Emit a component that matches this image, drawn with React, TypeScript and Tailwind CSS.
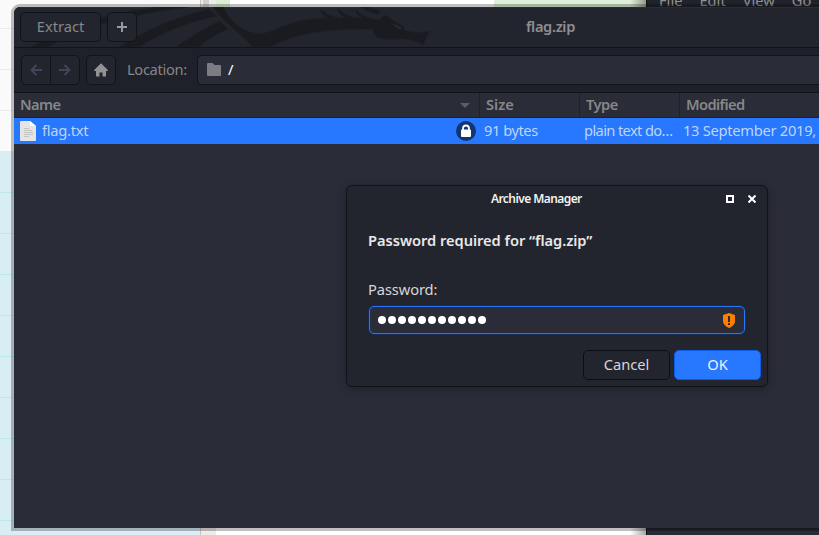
import type { ReactNode } from 'react';

const LINES = [28, 69, 110, 192, 233, 274, 315, 356, 397, 438, 479, 520];

function Backdrop() {
  return (
    <div className="absolute inset-0 flex">
      <div className="relative w-[200px] shrink-0 bg-[#d9edf5]">
        <div className="h-[151px] bg-[#fafafa]" />
        {LINES.map((y) => (
          <div
            key={y}
            className={`absolute left-0 h-px w-full ${y < 151 ? 'bg-[#ebebeb]' : 'bg-[#bce8ef]'}`}
            style={{ top: y }}
          />
        ))}
      </div>
      <div className="w-px bg-[#d0bfb9]" />
      <div className="w-[15px] bg-[#eeebe9]">
        <div className="ml-0.5 h-[7px] w-[6px] bg-[#cfcfcf]" />
      </div>
      <div className="relative w-[430px] bg-white">
        <div className="flex h-[7px] justify-between">
          <div className="w-[14px] bg-[#dcefd5]" />
          <div className="w-[152px] bg-[#dff0d8]" />
        </div>
        <div className="absolute right-0 top-0 h-full w-4 bg-linear-to-r from-transparent to-black/35" />
      </div>
      <div className="flex-1 overflow-hidden border-l border-[#101116] bg-[#20232a]">
        <div className="-mt-[10px] flex h-[540px] gap-[17px] pl-3 text-[14.67px] leading-5 text-[#909294]">
          <span>File</span>
          <span>Edit</span>
          <span>View</span>
          <span>Go</span>
        </div>
        <div className="h-[5px] bg-[#282a35]" />
      </div>
    </div>
  );
}

function Dragon() {
  return (
    <svg className="absolute left-0 top-0" width="440" height="40" viewBox="14 7 440 40" fill="#1a1b20">
      <g stroke="#1e2026" strokeWidth="1">
        <path d="M32 47C65 27 108 13 160 7H188C140 13 85 25 48 47Z" />
        <path d="M119 47C145 30 177 17 209 9L217 16C187 22 159 34 139 47Z" />
        <path d="M177 47C191 36 205 28 220 21L228 29C216 34 207 40 199 47Z" />
        <path d="M213 7H223C231 23 244 33.5 260 33.5C275 33.5 288 18 328 18C323 16 321 13 321 9C327 15 333 18 345 18C340 15 338 12 338 8C344 15 350 18 363 18C358 16 356 13 356 10C363 17 369 19 379 20L385 15C390 18 395 22 404 27V30C413 33 421 33 430 31C427 36 425 40 423 45C411 37 398 39 385 39C377 39 374 35 373 29C326 28 291 34 271 47H252C250 40 222 22 213 7Z" />
        <path d="M361 7C369 7 376 9 381 12L377 14C371 12 366 11 361 7Z" />
      </g>
      <path d="M391 24L399 29H403L397 25Z" fill="#282a31" />
    </svg>
  );
}

function HeaderCell({ className, children }: { className: string; children: ReactNode }) {
  return <div className={`flex items-center justify-between border-[#202229] font-semibold ${className}`}>{children}</div>;
}

function FileManager() {
  return (
    <div className="absolute left-[11px] top-1 h-[527px] w-[811px] rounded-tl-[9px] border-[3px] border-black/25 bg-clip-padding">
      <div className="flex h-full flex-col overflow-hidden rounded-tl-[6px] bg-[#2a2c37] text-[#858789]">
        <div className="relative flex h-[41px] shrink-0 items-center border-b border-[#121318] bg-[#23252e] shadow-[inset_0_1px_0_#2b2d35]">
          <Dragon />
          <div className="relative ml-1.5 flex h-[30px] w-[81px] items-center justify-center rounded-[5px] border border-[#121318] bg-[#23252e] pb-0.5">Extract</div>
          <div className="relative ml-1.5 flex h-[30px] w-[30px] items-center justify-center rounded-[5px] border border-[#121318] bg-[#23252e]">
            <svg width="10" height="10" viewBox="0 0 10 10" fill="#999a9c"><path d="M4 0h2v4h4v2H6v4H4V6H0V4h4z" /></svg>
          </div>
          <div className="ml-[389px] pb-0.5 font-semibold tracking-[-0.35px] text-[#8d8e90]">flag.zip</div>
        </div>
        <div className="flex h-[45px] shrink-0 items-center border-b border-[#121318] bg-[#1e2129]">
          <div className="ml-[7px] flex h-[30px] w-[59px] rounded-[5px] border border-[#121318] bg-[#23252e]">
            <div className="flex w-[29px] items-center justify-center border-r border-[#121318]">
              <svg width="12" height="12" viewBox="0 0 12 12" fill="none" stroke="#41445b" strokeWidth="2"><path d="M12 6H1.5M6.5 1 1.5 6l5 5" /></svg>
            </div>
            <div className="flex flex-1 items-center justify-center">
              <svg width="12" height="12" viewBox="0 0 12 12" fill="none" stroke="#41445b" strokeWidth="2"><path d="M0 6h10.5M5.5 1l5 5-5 5" /></svg>
            </div>
          </div>
          <div className="ml-1.5 flex h-[30px] w-[30px] items-center justify-center rounded-[5px] border border-[#121318] bg-[#23252e]">
            <svg width="14" height="14" viewBox="0 0 14 14" fill="#919294"><path d="M7 .3 13.8 7v1H12v5.5H8.5v-4h-3v4H2V8H.2V7z" /></svg>
          </div>
          <div className="ml-[11px] w-[70px] pb-0.5 tracking-[-0.33px]">Location:</div>
          <div className="flex h-[30px] flex-1 items-center rounded-l-[5px] border border-r-0 border-[#121318] bg-[#2a2c37] pl-[9px]">
            <svg width="15" height="14" viewBox="0 0 15 14" fill="#7c7d82"><path d="M1 0h4.5l2 2H13a1 1 0 0 1 1 1v10H1a1 1 0 0 1-1-1V1a1 1 0 0 1 1-1z" /></svg>
            <span className="ml-1.5 pb-0.5 text-white">/</span>
          </div>
        </div>
        <div className="flex h-[25px] shrink-0 border-b border-[#1d2028]">
          <HeaderCell className="w-[466px] border-r pl-1.5 pr-[9px] tracking-[-0.6px]">
            <span className="pb-0.5">Name</span>
            <svg width="10" height="5" viewBox="0 0 10 5" fill="#5c5e65"><path d="M0 0h10L5 5z" /></svg>
          </HeaderCell>
          <HeaderCell className="w-[100px] border-r pb-0.5 pl-1.5">Size</HeaderCell>
          <HeaderCell className="w-[100px] border-r pb-0.5 pl-1.5 tracking-[-0.5px]">Type</HeaderCell>
          <HeaderCell className="flex-1 pb-0.5 pl-1.5 tracking-[-0.6px]">Modified</HeaderCell>
        </div>
        <div className="flex h-[26px] shrink-0 items-center bg-[#2777ff] text-[#bfd4f8]">
          <div className="flex w-[470px] items-center pl-1.5">
            <svg width="16" height="20" viewBox="0 0 16 20">
              <path d="M1 0h9l6 5v14a1 1 0 0 1-1 1H1a1 1 0 0 1-1-1V1a1 1 0 0 1 1-1z" fill="#e5e5e5" />
              <path d="M10 0v4a1 1 0 0 0 1 1h5z" fill="#fff" />
              <path d="M4 7.5h5M4 9.5h8M4 11.5h9M4 13.5h9M4 15.5h5" stroke="#c4c4c4" />
            </svg>
            <span className="ml-1.5 flex-1 pb-0.5 tracking-[-0.25px]">flag.txt</span>
            <svg className="mr-2" width="20" height="20" viewBox="0 0 20 20">
              <circle cx="10" cy="10" r="10" fill="#14356f" />
              <path d="M7 9V7.5a3 3 0 0 1 6 0V9" fill="none" stroke="#fff" strokeWidth="1.8" />
              <rect x="5" y="8.5" width="10" height="7.5" rx="1" fill="#fff" />
            </svg>
          </div>
          <div className="w-[100px] pb-0.5 tracking-[-0.45px]">91 bytes</div>
          <div className="w-[99px] pb-0.5 tracking-[-0.62px]">plain text do…</div>
          <div className="pb-0.5 tracking-[-0.27px]">13 September 2019,</div>
        </div>
      </div>
    </div>
  );
}

function PasswordDialog() {
  return (
    <div className="absolute left-[346px] top-[185px] flex h-[202px] w-[422px] flex-col rounded-[6px] border border-[#121318] bg-[#23252e] text-[#d6d7d8] shadow-[0_2px_10px_rgba(0,0,0,0.3)]">
      <div className="flex h-[26px] items-center">
        <div className="ml-[144px] flex-1 text-[12px] font-semibold tracking-[-0.58px] text-[#f1f1f1]">Archive Manager</div>
        <svg width="8" height="8" viewBox="0 0 8 8" fill="none" stroke="#fff" strokeWidth="2"><path d="M1 1h6v6H1z" /></svg>
        <svg className="ml-3.5 mr-[11px]" width="8" height="8" viewBox="0 0 8 8" stroke="#fff" strokeWidth="2"><path d="M.5.5l7 7M7.5.5l-7 7" /></svg>
      </div>
      <div className="ml-[21px] mt-[18px] font-semibold leading-5 tracking-[-0.04px] text-[#e8e8e8]">Password required for “flag.zip”</div>
      <div className="ml-[21px] mt-[29px] leading-5 tracking-[-0.1px]">Password:</div>
      <div className="ml-[22px] mt-[7px] flex h-7 w-[376px] items-center justify-between rounded-[5px] border border-[#2777ff] bg-[#2a2c37] pl-2 pr-[9px] shadow-[0_0_0_1px_rgba(0,50,145,0.5)]">
        <div className="flex gap-[2px]">
          {Array.from({ length: 11 }, (_, i) => (
            <span key={i} className="h-2 w-2 rounded-full bg-white" />
          ))}
        </div>
        <svg width="12" height="15" viewBox="0 0 12 15">
          <path d="M6 0l6 2v6c0 3-2.5 5.5-6 7-3.5-1.5-6-4-6-7V2z" fill="#ff7f00" />
          <path d="M5 3h2v6H5zM5 10h2v2H5z" fill="#2a2c37" />
        </svg>
      </div>
      <div className="mr-1.5 mt-4 flex justify-end gap-1">
        <button className="h-[30px] w-[87px] rounded-[5px] border border-[#0d0e12] bg-[#23252e] pb-0.5">Cancel</button>
        <button className="h-[30px] w-[87px] rounded-[5px] border border-[#0b5cec] bg-[#2777ff] pb-0.5 text-[#edf1f8]">OK</button>
      </div>
    </div>
  );
}

export default function App() {
  return (
    <div className="relative h-[535px] w-[819px] overflow-hidden whitespace-nowrap font-['Noto_Sans',sans-serif] text-[14.67px] leading-5">
      <Backdrop />
      <FileManager />
      <PasswordDialog />
    </div>
  );
}
